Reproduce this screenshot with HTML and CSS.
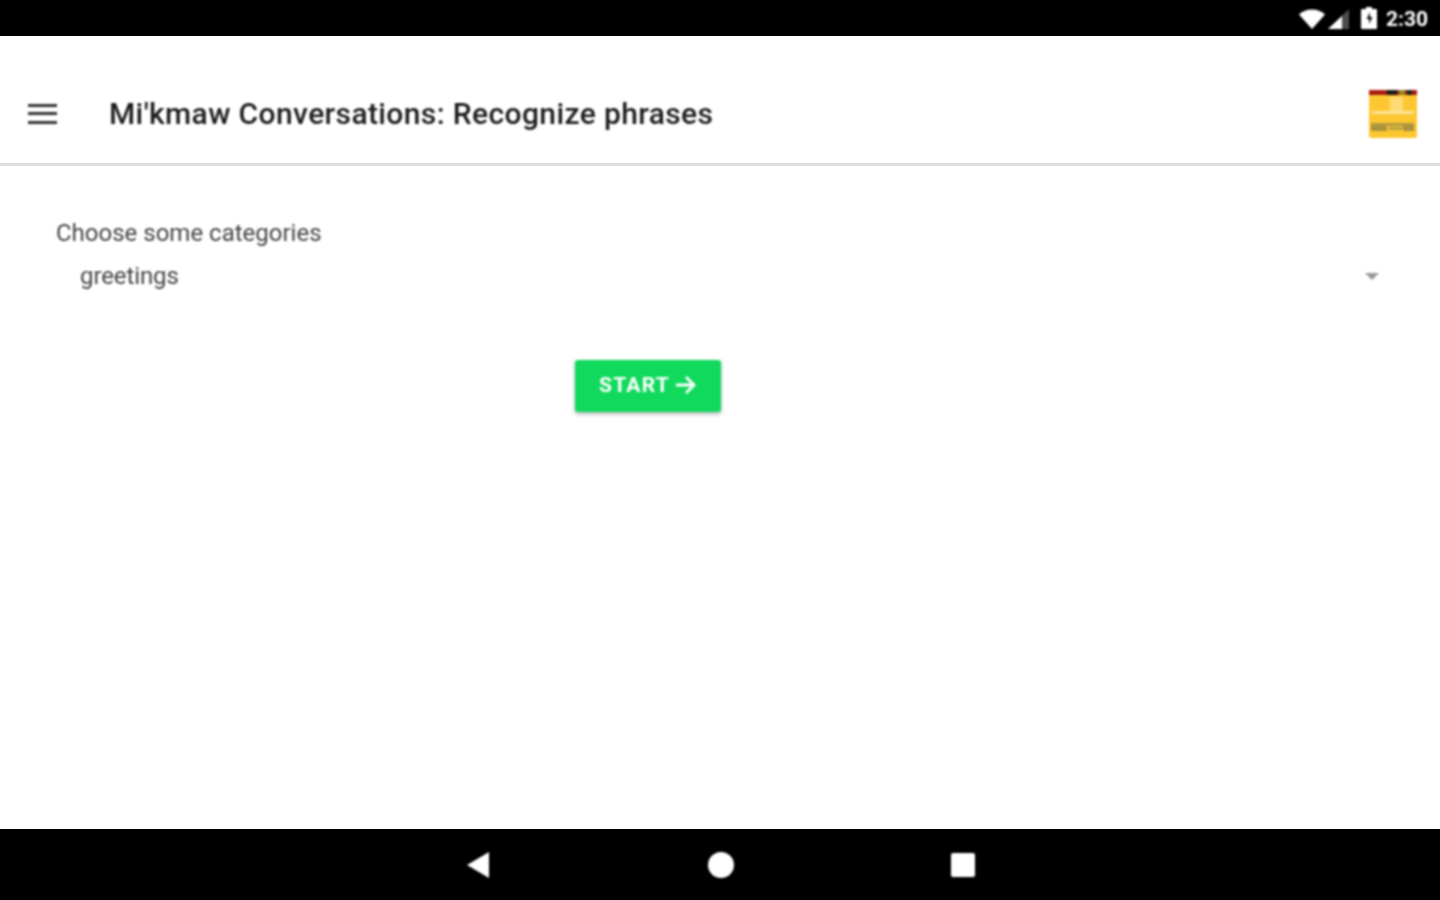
FILE: index.html
```html
<!DOCTYPE html>
<html lang="en">
<head>
<meta charset="utf-8">
<title>Mi'kmaw Conversations: Recognize phrases</title>
<link rel="stylesheet" href="styles.css">
</head>
<body>
<div class="screen">
  <header class="status-bar">
    <svg class="wifi" width="26" height="20" viewBox="0 0 26 20"><path d="M0 5.500C3.500 2.200 8 .5 13 .5s9.500 1.700 13 5L13 20z" fill="#fff"/></svg>
    <svg class="signal" width="21" height="20" viewBox="0 0 21 20"><path d="M21 0v20H0z" fill="#fff" fill-opacity=".3"/><path d="M14 7v13H0z" fill="#fff"/></svg>
    <svg class="battery" width="16" height="22" viewBox="0 0 16 22"><path d="M5 0h6v2h4a1 1 0 0 1 1 1v18a1 1 0 0 1-1 1H1a1 1 0 0 1-1-1V3a1 1 0 0 1 1-1h4z" fill="#fff"/><path d="M9 5 5.500 12H8v5l3.500-7H9z" fill="#111"/></svg>
    <span class="time">2:30</span>
  </header>
  <div class="app-bar">
    <button class="menu-button" type="button" aria-label="Menu">
      <span class="menu-line"></span><span class="menu-line"></span><span class="menu-line"></span>
    </button>
    <h1 class="title">Mi'kmaw Conversations: Recognize phrases</h1>
    <svg class="logo" width="48" height="48" viewBox="0 0 48 48">
      <rect width="48" height="48" rx="2" fill="#fdc731"/>
      <rect width="48" height="5" fill="#a81c12"/>
      <rect x="18" width="10" height="5" fill="#1a1a1a"/>
      <rect x="30" width="6" height="5" fill="#8a8a24"/>
      <rect x="38" width="5" height="5" fill="#222"/>
      <rect x="21" y="7" width="13" height="14" fill="#fedb74"/>
      <rect x="3" y="21" width="42" height="3" fill="#fee39a"/>
      <rect x="2" y="33" width="43" height="3" fill="#b09a40"/>
      <rect x="2" y="36" width="16" height="5" fill="#a8923c"/>
      <rect x="20" y="37" width="13" height="3" fill="#b8a040"/>
      <rect x="34" y="35" width="11" height="6" fill="#a8923c"/>
    </svg>
  </div>
  <main class="content">
    <form class="form">
      <p class="field-label">Choose some categories</p>
      <div class="select">
        <span class="select-value">greetings</span>
        <span class="select-arrow"></span>
      </div>
      <div class="actions">
        <button class="start" type="button">START
          <svg width="22" height="20" viewBox="0 0 22 20"><path d="M1 10h18M11 2l8 8-8 8" fill="none" stroke="#fff" stroke-width="2.800"/></svg>
        </button>
      </div>
    </form>
  </main>
  <footer class="nav-bar">
    <svg width="24" height="26" viewBox="0 0 24 26"><path d="M23 0v26L1 13z" fill="#fff"/></svg>
    <span class="home"></span>
    <span class="recent"></span>
  </footer>
</div>
</body>
</html>
```
FILE: styles.css
```css
* { box-sizing: border-box; }
html, body { margin: 0; height: 100%; background: #fff; }
.screen {
  width: 1440px;
  height: 900px;
  display: flex;
  flex-direction: column;
  overflow: hidden;
  font-family: Roboto, "Liberation Sans", sans-serif;
}
.status-bar > *, .app-bar > *, .form, .nav-bar > * { filter: blur(0.8px); }
.status-bar {
  height: 36px;
  flex: none;
  background: #000;
  display: flex;
  align-items: center;
  justify-content: flex-end;
  padding-right: 12px;
  color: #fff;
}
.wifi { margin-right: 3px; margin-top: 2px; }
.signal { margin-right: 12px; margin-top: 2px; }
.battery { margin-right: 9px; }
.time { font-size: 21px; font-weight: 700; line-height: 36px; padding-top: 2px; }
.app-bar {
  height: 130px;
  flex: none;
  display: flex;
  align-items: center;
  padding: 28px 23px 0 28px;
  border-bottom: 3px solid #dedede;
}
.menu-button {
  width: 29px;
  height: 20px;
  padding: 0;
  border: 0;
  background: none;
  display: flex;
  flex-direction: column;
  justify-content: space-between;
  margin-right: 52px;
}
.menu-line { display: block; width: 100%; height: 3px; background: #333; }
.title {
  flex: 1;
  margin: 0;
  font-size: 30px;
  font-weight: 500;
  line-height: 40px;
  letter-spacing: 0.38px;
  color: #1c1c1c;
}
.logo { flex: none; }
.content { flex: 1; }
.form { width: 90%; padding: 52px 0 0 56px; }
.field-label {
  margin: 0;
  font-size: 24px;
  line-height: 30px;
  color: #444;
}
.select {
  height: 44px;
  display: flex;
  align-items: center;
  justify-content: space-between;
  margin: 6px -100px 0 0;
  padding: 0 1px 0 24px;
  width: 1324px;
}
.select-value { font-size: 24px; letter-spacing: -0.1px; color: #444; }
.select-arrow {
  width: 0;
  height: 0;
  border-left: 7px solid transparent;
  border-right: 7px solid transparent;
  border-top: 7px solid #999;
}
.actions { display: flex; justify-content: center; margin: 62px 0 0 -56px; }
.start {
  width: 146px;
  height: 52px;
  padding: 0 0 2px;
  border: 0;
  border-radius: 3px;
  background: #10d95c;
  color: #fff;
  font: 700 21px Roboto, "Liberation Sans", sans-serif;
  letter-spacing: 1.2px;
  display: flex;
  align-items: center;
  justify-content: center;
  gap: 5px;
  box-shadow: 0 2px 4px rgba(0,0,0,.3);
}
.nav-bar {
  height: 71px;
  flex: none;
  background: #000;
  display: flex;
  align-items: center;
  padding-left: 466px;
}
.home {
  width: 26px;
  height: 26px;
  border-radius: 50%;
  background: #fff;
  margin-left: 218px;
}
.recent {
  width: 24px;
  height: 24px;
  border-radius: 2px;
  background: #fff;
  margin-left: 217px;
}
```
